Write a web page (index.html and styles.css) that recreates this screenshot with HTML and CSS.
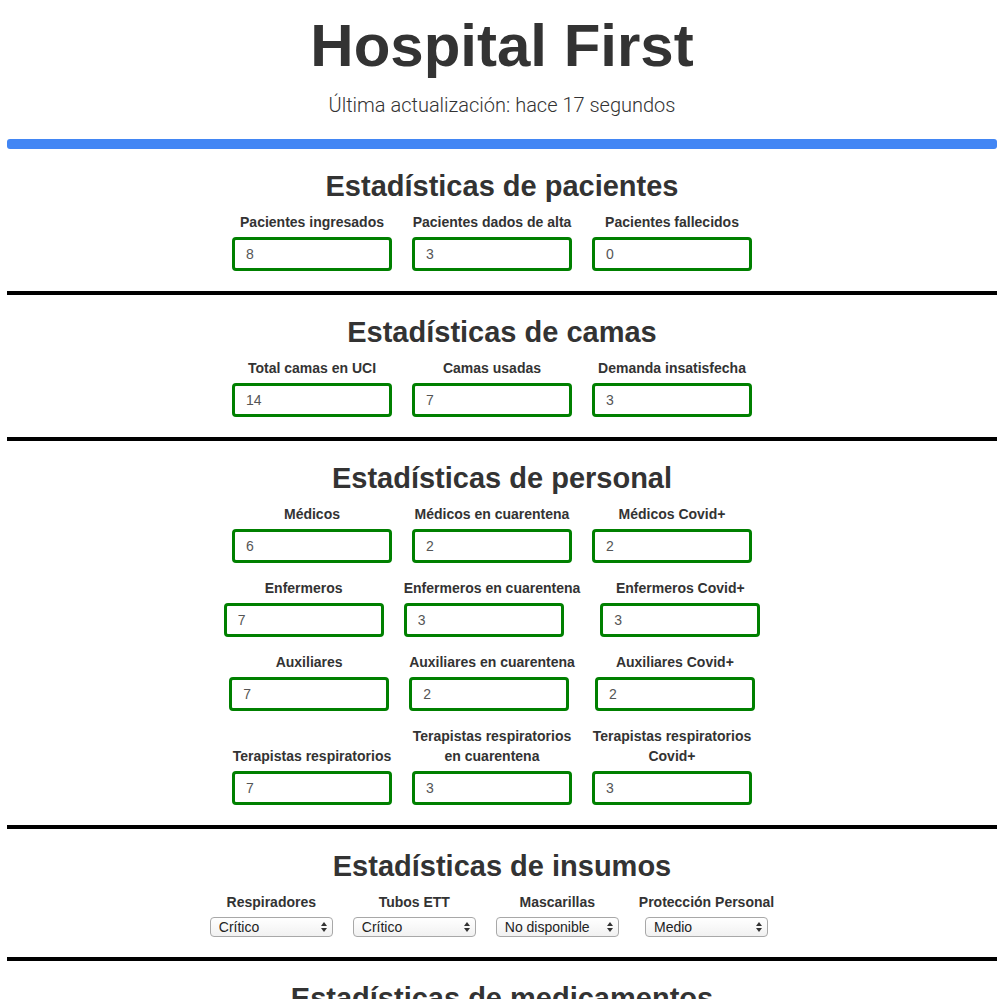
FILE: index.html
```html
<!DOCTYPE html>
<html lang="es">
<head>
<meta charset="utf-8">
<title>Hospital First</title>
<link rel="stylesheet" href="styles.css">
</head>
<body>
<header class="header">
  <h1 class="title">Hospital First</h1>
  <p class="updated">Última actualización: hace 17 segundos</p>
  <div class="progress"></div>
</header>

<section class="section">
  <h2 class="section-title">Estadísticas de pacientes</h2>
  <div class="rows">
    <div class="row">
      <div class="field"><label class="label">Pacientes ingresados</label><input class="input" type="text" value="8"></div>
      <div class="field"><label class="label">Pacientes dados de alta</label><input class="input" type="text" value="3"></div>
      <div class="field"><label class="label">Pacientes fallecidos</label><input class="input" type="text" value="0"></div>
    </div>
  </div>
</section>

<section class="section">
  <h2 class="section-title">Estadísticas de camas</h2>
  <div class="rows">
    <div class="row">
      <div class="field"><label class="label">Total camas en UCI</label><input class="input" type="text" value="14"></div>
      <div class="field"><label class="label">Camas usadas</label><input class="input" type="text" value="7"></div>
      <div class="field"><label class="label">Demanda insatisfecha</label><input class="input" type="text" value="3"></div>
    </div>
  </div>
</section>

<section class="section">
  <h2 class="section-title">Estadísticas de personal</h2>
  <div class="rows">
    <div class="row">
      <div class="field"><label class="label">Médicos</label><input class="input" type="text" value="6"></div>
      <div class="field"><label class="label">Médicos en cuarentena</label><input class="input" type="text" value="2"></div>
      <div class="field"><label class="label">Médicos Covid+</label><input class="input" type="text" value="2"></div>
    </div>
    <div class="row">
      <div class="field"><label class="label">Enfermeros</label><input class="input" type="text" value="7"></div>
      <div class="field"><label class="label">Enfermeros en cuarentena</label><input class="input" type="text" value="3"></div>
      <div class="field"><label class="label">Enfermeros Covid+</label><input class="input" type="text" value="3"></div>
    </div>
    <div class="row">
      <div class="field"><label class="label">Auxiliares</label><input class="input" type="text" value="7"></div>
      <div class="field"><label class="label">Auxiliares en cuarentena</label><input class="input" type="text" value="2"></div>
      <div class="field"><label class="label">Auxiliares Covid+</label><input class="input" type="text" value="2"></div>
    </div>
    <div class="row">
      <div class="field field--narrow"><label class="label">Terapistas respiratorios</label><input class="input" type="text" value="7"></div>
      <div class="field field--narrow"><label class="label">Terapistas respiratorios en cuarentena</label><input class="input" type="text" value="3"></div>
      <div class="field field--narrow"><label class="label">Terapistas respiratorios Covid+</label><input class="input" type="text" value="3"></div>
    </div>
  </div>
</section>

<section class="section">
  <h2 class="section-title">Estadísticas de insumos</h2>
  <div class="rows">
    <div class="row">
      <div class="field field--select"><label class="label">Respiradores</label>
        <span class="select"><select class="select-input"><option>Crítico</option><option>Medio</option><option>No disponible</option></select><svg class="select-arrows" width="6" height="10" viewBox="0 0 6 10"><path d="M0 4 L3 0 L6 4 Z M0 6 L3 10 L6 6 Z" fill="#333"/></svg></span>
      </div>
      <div class="field field--select"><label class="label">Tubos ETT</label>
        <span class="select"><select class="select-input"><option>Crítico</option><option>Medio</option><option>No disponible</option></select><svg class="select-arrows" width="6" height="10" viewBox="0 0 6 10"><path d="M0 4 L3 0 L6 4 Z M0 6 L3 10 L6 6 Z" fill="#333"/></svg></span>
      </div>
      <div class="field field--select"><label class="label">Mascarillas</label>
        <span class="select"><select class="select-input"><option>No disponible</option><option>Crítico</option><option>Medio</option></select><svg class="select-arrows" width="6" height="10" viewBox="0 0 6 10"><path d="M0 4 L3 0 L6 4 Z M0 6 L3 10 L6 6 Z" fill="#333"/></svg></span>
      </div>
      <div class="field field--select"><label class="label">Protección Personal</label>
        <span class="select"><select class="select-input"><option>Medio</option><option>Crítico</option><option>No disponible</option></select><svg class="select-arrows" width="6" height="10" viewBox="0 0 6 10"><path d="M0 4 L3 0 L6 4 Z M0 6 L3 10 L6 6 Z" fill="#333"/></svg></span>
      </div>
    </div>
  </div>
</section>

<section class="section">
  <h2 class="section-title">Estadísticas de medicamentos</h2>
</section>
</body>
</html>
```

FILE: styles.css
```css
* { box-sizing: border-box; }

html, body {
  background: #fff;
}

body {
  margin: 0;
  padding: 0 7px;
  font-family: "Liberation Sans", Arial, sans-serif;
  color: #333;
}

.header {
  padding-top: 11px;
  text-align: center;
}

.title {
  margin: 0;
  font-size: 60px;
  line-height: 70px;
  font-weight: bold;
  color: #333;
}

.updated {
  margin: 12px 0 0;
  font-family: Roboto, "Liberation Sans", sans-serif;
  font-weight: 300;
  font-size: 20px;
  line-height: 24px;
  color: #333;
}

.progress {
  margin-top: 22px;
  height: 10px;
  border-radius: 3px;
  background: #4286f4;
}

.section {
  padding: 19px 0 20px;
  border-bottom: 4px solid #000;
  text-align: center;
}

.section-title {
  margin: 0 0 8px;
  font-size: 29px;
  line-height: 36px;
  font-weight: bold;
  color: #333;
}

.rows {
  display: flex;
  flex-direction: column;
  gap: 15px;
}

.row {
  display: flex;
  justify-content: center;
  align-items: flex-end;
}

.field {
  display: flex;
  flex-direction: column;
  align-items: flex-start;
  margin-right: 20px;
}

.field--narrow {
  width: 160px;
}

.field--select {
  align-items: center;
}

.label {
  align-self: stretch;
  display: block;
  margin-bottom: 5px;
  font-size: 14px;
  line-height: 20px;
  font-weight: bold;
  color: #333;
  text-align: center;
}

.input {
  display: block;
  width: 160px;
  height: 34px;
  margin: 0;
  padding: 0 11px;
  border: 3px solid #008000;
  border-radius: 4px;
  font-family: "Liberation Sans", Arial, sans-serif;
  font-size: 14px;
  color: #555;
  background: #fff;
  outline: none;
}

.select {
  position: relative;
  display: inline-block;
  width: 123px;
  height: 20px;
}

.select-input {
  appearance: none;
  -webkit-appearance: none;
  width: 123px;
  height: 20px;
  margin: 0;
  padding: 0 16px 0 8px;
  border: 1px solid #a8a8a8;
  border-radius: 4px;
  background: linear-gradient(#ffffff, #f1f1f1);
  font-family: "Liberation Sans", Arial, sans-serif;
  font-size: 14px;
  line-height: 18px;
  color: #222;
  text-align: left;
}

.select-arrows {
  position: absolute;
  right: 6px;
  top: 5px;
  pointer-events: none;
}
```
